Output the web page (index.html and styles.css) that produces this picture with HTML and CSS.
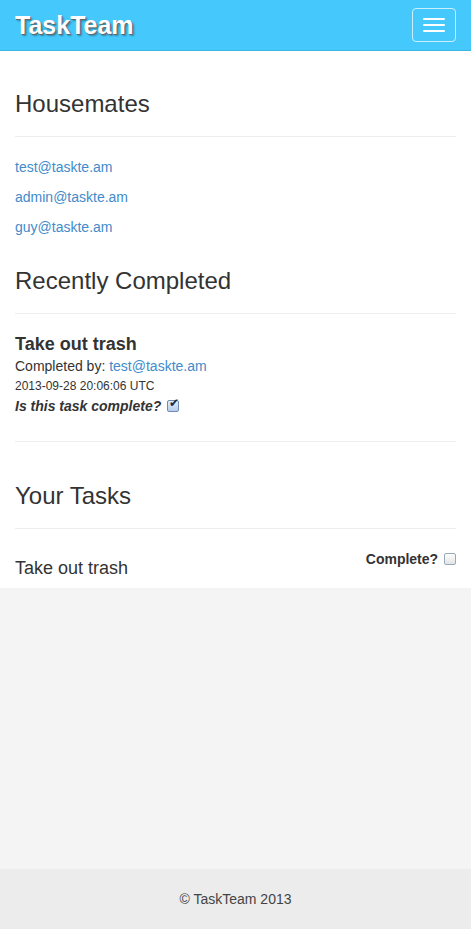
FILE: index.html
```html
<!DOCTYPE html>
<html lang="en">
<head>
  <meta charset="UTF-8">
  <title>TaskTeam</title>
  <link rel="stylesheet" href="styles.css">
</head>
<body>

  <!-- Navbar -->
  <div class="navbar">
    <a class="brand" href="#">TaskTeam</a>
    <button class="navbar-toggle" type="button">
      <span class="icon-bar"></span>
      <span class="icon-bar"></span>
      <span class="icon-bar"></span>
    </button>
  </div>

  <div class="wrap">
    <div class="container">

      <div class="page-header">
        <h2>Housemates</h2>
      </div>
      <ul class="housemates">
        <li><a href="#">test@taskte.am</a></li>
        <li><a href="#">admin@taskte.am</a></li>
        <li><a href="#">guy@taskte.am</a></li>
      </ul>

      <div class="page-header">
        <h2>Recently Completed</h2>
      </div>
      <div class="task done">
        <h4>Take out trash</h4>
        <p>Completed by: <a href="#">test@taskte.am</a></p>
        <p class="small">2013-09-28 20:06:06 UTC</p>
        <p class="confirm">Is this task complete? <input type="checkbox" class="check" checked></p>
      </div>

      <hr>

      <div class="page-header">
        <h2>Your Tasks</h2>
      </div>
      <div class="task open">
        <label class="complete">Complete? <input type="checkbox" class="check"></label>
        <h4>Take out trash</h4>
      </div>

    </div>
  </div>

  <div class="footer">
    <p>&copy; TaskTeam 2013</p>
  </div>

</body>
</html>
```

FILE: styles.css
```css
* {
  box-sizing: border-box;
}

body {
  margin: 0;
  font-family: 'Liberation Sans', Arial, sans-serif;
  font-size: 14px;
  line-height: 20px;
  color: #333;
  background: #f4f4f4;
  display: flex;
  flex-direction: column;
  min-height: 100vh;
}

a {
  color: #428bca;
  text-decoration: none;
}

.navbar {
  height: 51px;
  background: #45c9fc;
  border-bottom: 1px solid #3cb4e3;
  display: flex;
  justify-content: space-between;
  align-items: center;
  padding: 0 15px;
}

.brand {
  color: #fff;
  font-size: 25px;
  font-weight: bold;
  text-shadow: 1px 1px 0 #666, 2px 2px 2px rgba(0, 0, 0, 0.35);
}

.navbar-toggle {
  width: 44px;
  height: 34px;
  margin-top: -1px;
  background: transparent;
  border: 1px solid rgba(255, 255, 255, 0.7);
  border-radius: 4px;
  display: flex;
  flex-direction: column;
  justify-content: center;
  align-items: center;
  gap: 4px;
  padding: 0;
}

.icon-bar {
  display: block;
  width: 22px;
  height: 2px;
  background: #fff;
  border-radius: 1px;
}

.wrap {
  flex: 1;
}

.container {
  background: #fff;
  padding: 0 15px 10px;
  overflow: hidden;
}

.page-header {
  margin: 40px 0 20px;
  padding-bottom: 9px;
  border-bottom: 1px solid #eee;
}

.page-header h2 {
  margin: 0 0 10px;
  font-size: 24px;
  font-weight: 500;
  line-height: 26px;
}

.housemates {
  list-style: none;
  margin: 0 0 -9px;
  padding: 0;
}

.housemates li {
  margin-bottom: 10px;
}

.task h4 {
  margin: 0;
  font-size: 18px;
  line-height: 20px;
}

.task.done h4 {
  font-weight: bold;
  margin-bottom: 2px;
}

.task p {
  margin: 0;
}

.task .small {
  font-size: 12px;
}

.confirm {
  font-weight: bold;
  font-style: italic;
}

.task.open h4 {
  font-weight: 500;
  padding-top: 9px;
}

.complete {
  float: right;
  font-weight: bold;
}

.check {
  appearance: none;
  width: 12px;
  height: 12px;
  margin: 0 0 0 2px;
  vertical-align: -1px;
  border: 1px solid #9aa8bd;
  border-radius: 2px;
  background: linear-gradient(#fdfdfd, #e4e4e4);
  position: relative;
}

.check:checked {
  border-color: #6e8bb5;
  background: linear-gradient(#e3edf9, #b7cdec);
}

.check:checked::after {
  content: "\2714";
  position: absolute;
  left: 1px;
  top: -5px;
  font-size: 12px;
  font-style: normal;
  color: #1c2a40;
}

hr {
  margin: 25px 0 41px;
  border: 0;
  border-top: 1px solid #eee;
}

.footer {
  height: 60px;
  background: #ececec;
  display: flex;
  justify-content: center;
  align-items: center;
}

.footer p {
  margin: 0;
  color: #444;
}
```
